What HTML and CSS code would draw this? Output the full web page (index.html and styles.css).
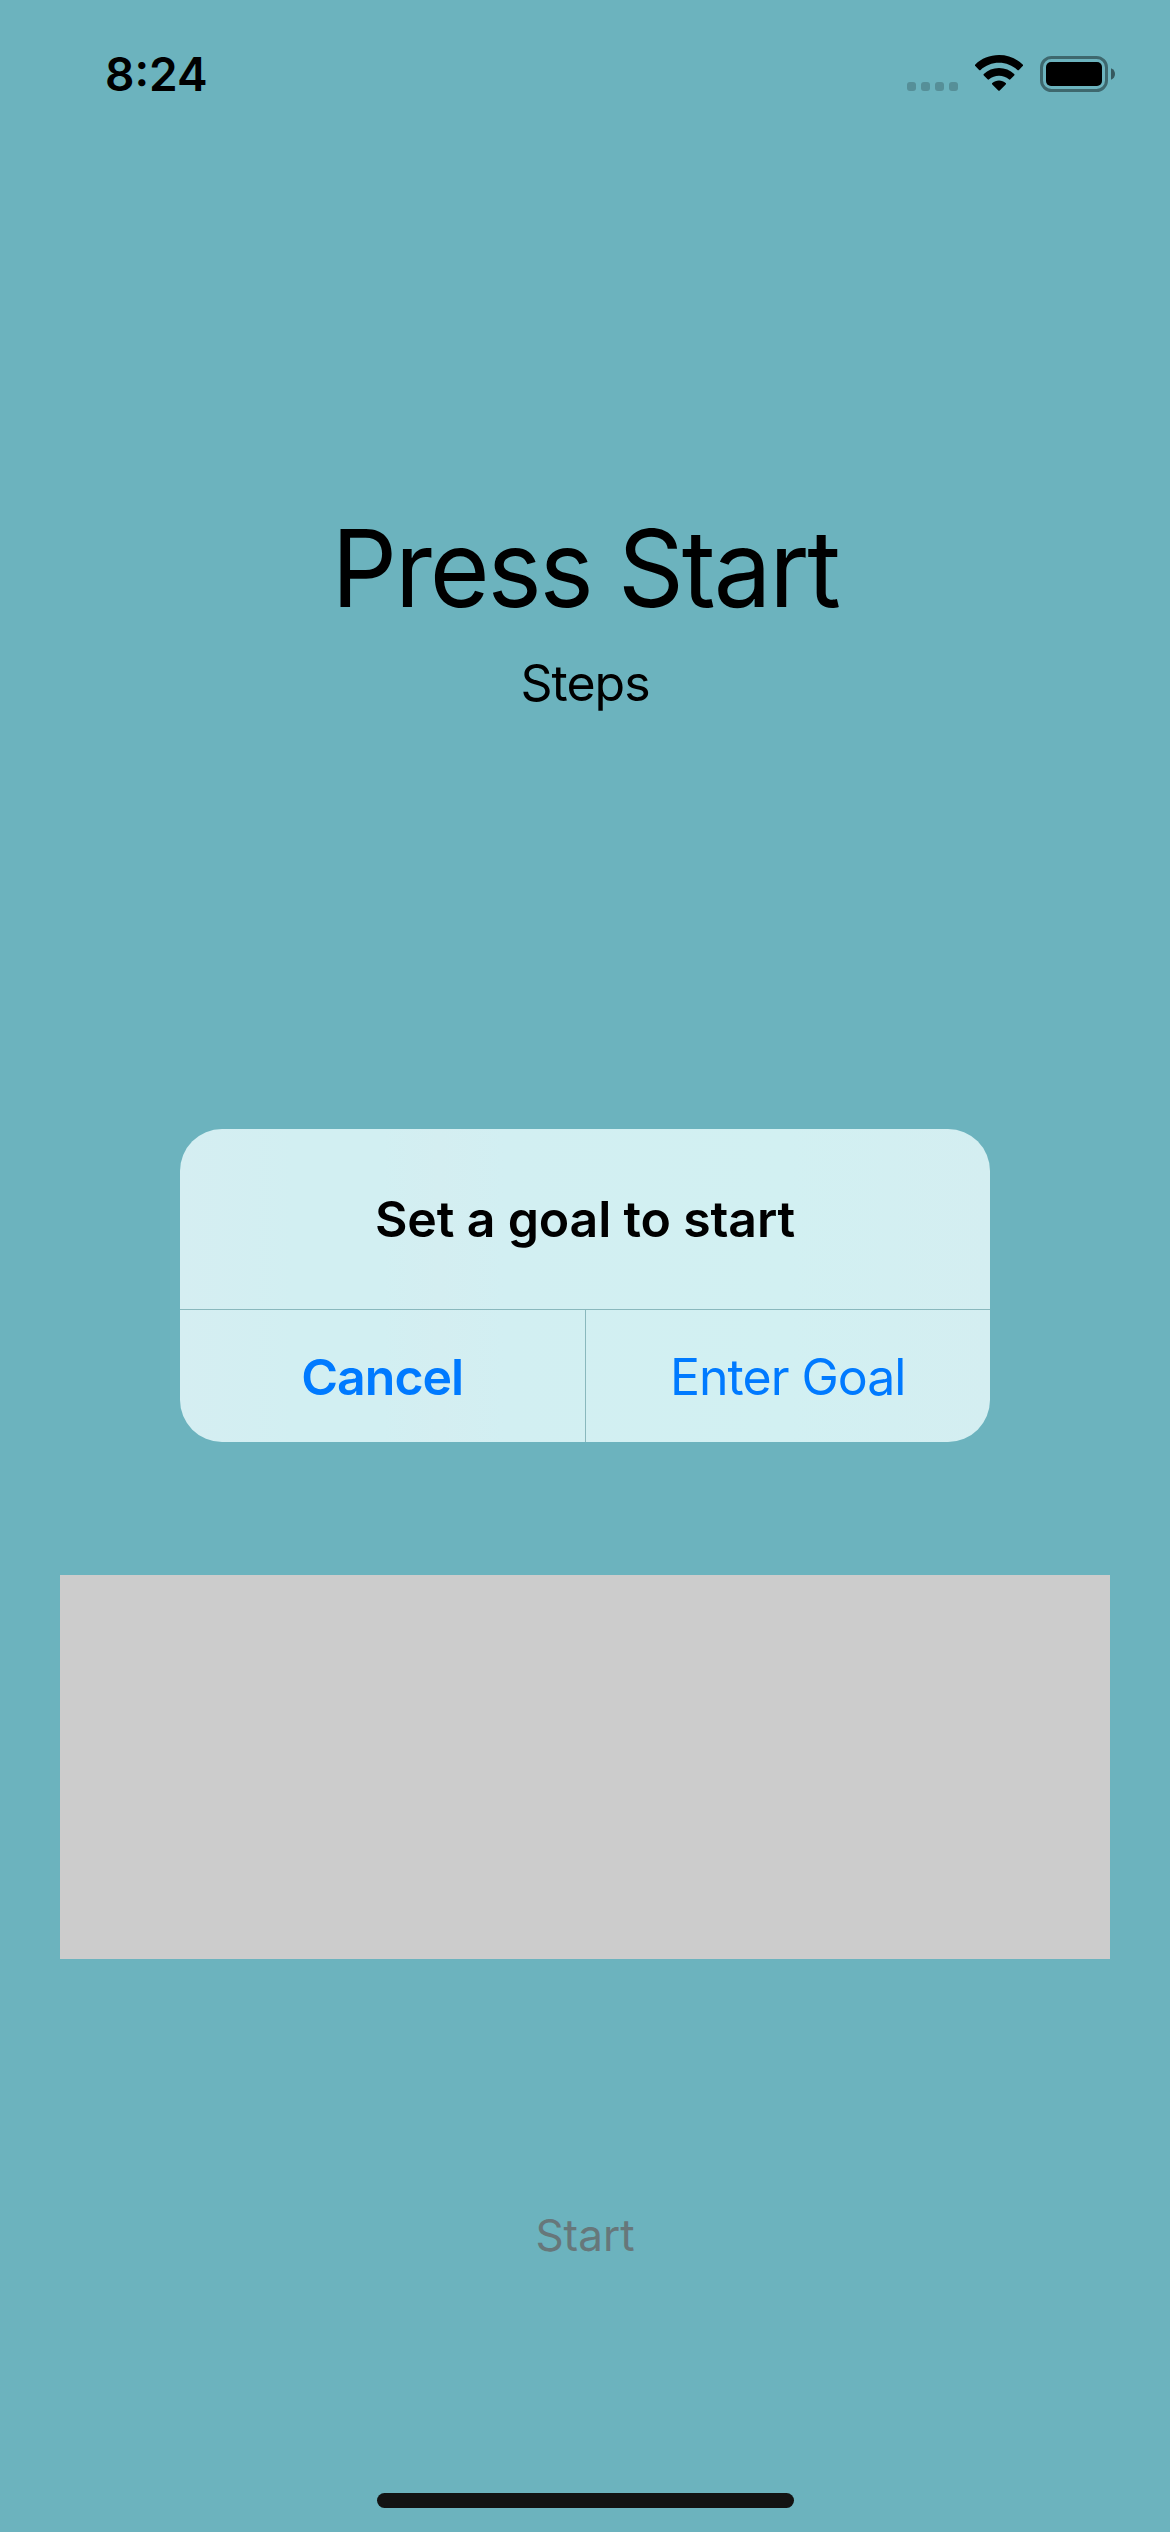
FILE: index.html
```html
<!DOCTYPE html>
<html lang="en">
<head>
<meta charset="utf-8">
<title>Steps</title>
<link rel="stylesheet" href="styles.css">
</head>
<body>
<div class="screen">
  <header class="status">
    <span class="time">8:24</span>
    <div class="indicators">
      <svg class="signal" width="51" height="9" viewBox="0 0 51 9"><rect width="9" height="9" rx="3"/><rect x="14" width="9" height="9" rx="3"/><rect x="28" width="9" height="9" rx="3"/><rect x="42" width="9" height="9" rx="3"/></svg>
      <svg class="wifi" width="48" height="36" viewBox="0 0 48 36"><path d="M24 0C33.2 0 41.600 3.500 47.700 9.500Q48.500 10.300 47.700 11.100L43.900 15Q43.200 15.700 42.400 15C37.500 10.500 31 7.800 24 7.800S10.500 10.500 5.600 15Q4.800 15.700 4.100 15L.3 11.100Q-.5 10.300.3 9.500C6.400 3.500 14.800 0 24 0Z"/><path d="M24 13C29.900 13 35.200 15.300 39.200 18.900Q40 19.700 39.200 20.500L35.400 24.300Q34.700 25 33.900 24.300C31.200 22.100 27.800 20.700 24 20.700S16.800 22.100 14.100 24.300Q13.300 25 12.600 24.300L8.800 20.500Q8 19.700 8.800 18.900C12.800 15.300 18.100 13 24 13Z"/><path d="M24 25.600C26.500 25.600 28.900 26.500 30.700 28Q31.400 28.700 30.700 29.400L24.700 35.500Q24 36.200 23.300 35.500L17.300 29.400Q16.600 28.700 17.300 28C19.100 26.500 21.500 25.600 24 25.600Z"/></svg>
      <svg class="battery" width="75" height="36" viewBox="0 0 75 36"><rect x="1.500" y="1.500" width="65" height="33" rx="10" fill="none" stroke="#000" stroke-width="3" opacity=".42"/><rect x="6" y="6" width="56" height="24" rx="5"/><path d="M71 12.200Q75 14 75 18T71 23.800Z" opacity=".5"/></svg>
    </div>
  </header>
  <main class="content">
    <h1 class="count">Press Start</h1>
    <p class="unit">Steps</p>
    <div class="panel"></div>
    <button class="start" disabled>Start</button>
  </main>
  <div class="home"></div>
  <section class="alert" role="alertdialog">
    <h2 class="alert-title">Set a goal to start</h2>
    <div class="actions">
      <button class="action cancel">Cancel</button>
      <button class="action enter">Enter Goal</button>
    </div>
  </section>
</div>
</body>
</html>
```
FILE: styles.css
```css
* { box-sizing: border-box; margin: 0; padding: 0; }
body { font-family: Inter, "Liberation Sans", sans-serif; color: #000; background: #6cb3be; }
button { font: inherit; border: 0; background: none; }
.screen { position: relative; width: 1170px; height: 2532px; display: flex; flex-direction: column; overflow: hidden; background: #6cb3be; }
.status { height: 141px; padding: 44px 55px 0 105px; display: flex; justify-content: space-between; align-items: flex-start; }
.time { font-size: 46px; line-height: 60px; font-weight: 600; letter-spacing: 0; }
.indicators { display: flex; align-items: flex-end; padding-top: 11px; }
.signal { fill: #568f98; margin-right: 17px; }
.wifi { margin-right: 17px; }
.battery { position: relative; top: 1px; }
.content { flex: 1; display: flex; flex-direction: column; align-items: center; padding-top: 357px; }
.count { font-size: 107px; line-height: 140px; font-weight: 400; letter-spacing: -2.3px; white-space: nowrap; transform: scaleX(.96); }
.unit { margin-top: 15px; font-size: 50px; line-height: 60px; letter-spacing: -1px; }
.panel { width: 1050px; height: 384px; margin-top: 862px; background: #ccc; }
.start { margin-top: 246px; font-size: 44px; line-height: 60px; letter-spacing: 0; color: #67777a; }
.home { width: 417px; height: 15px; margin: 0 auto 24px; border-radius: 8px; background: #131313; }
.alert { position: absolute; left: 180px; top: 1129px; width: 810px; height: 313px; border-radius: 42px; overflow: hidden; display: flex; flex-direction: column; background: linear-gradient(90deg, #d5eef2 0%, #d2eff2 14%, #d2eff2 25%, #d4eef1 32%, #d2eff2 40%, #d2f0f2 75%, #d4eef1 100%); }
.alert-title { height: 180px; padding-top: 60px; text-align: center; font-size: 50px; line-height: 60px; font-weight: 600; letter-spacing: -.15px; }
.actions { flex: 1; display: flex; border-top: 1px solid #89b8bd; }
.action { flex: 1; padding-top: 2px; font-size: 50px; line-height: 60px; color: #007aff; }
.cancel { border-right: 1px solid #89b8bd; font-weight: 600; letter-spacing: -1px; }
.enter { letter-spacing: -1px; }
```
